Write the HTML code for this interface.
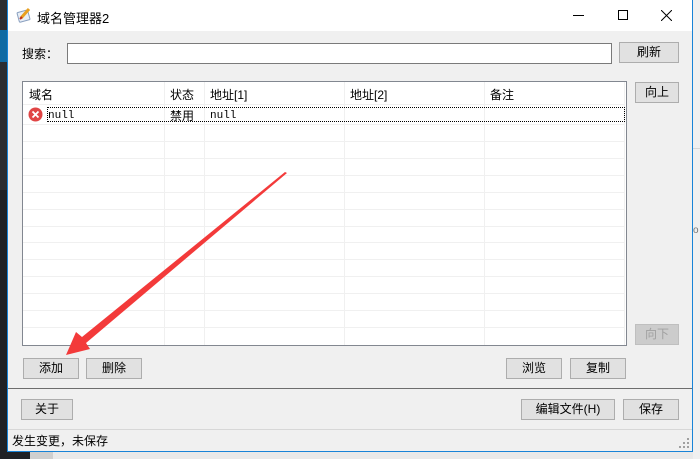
<!DOCTYPE html>
<html><head><meta charset="utf-8"><style>
*{margin:0;padding:0;box-sizing:border-box}
body{width:700px;height:459px;position:relative;overflow:hidden;background:#e9e9e9;font-family:"Liberation Sans","Noto Sans CJK SC",sans-serif;font-size:12px;color:#000}
.a{position:absolute}
.btn{position:absolute;background:#e1e1e1;border:1px solid #adadad;text-align:center;line-height:18px;font-size:12px}
.dis{color:#a0a0a0;background:#cccccc;border-color:#bfbfbf}
.hl{position:absolute;left:23px;width:601px;height:1px;background:#f0f0f0}
.vl{position:absolute;top:82px;height:263px;width:1px;background:#f0f0f0}
.th{position:absolute;top:86px;font-size:12px}
</style></head><body>
<div class="a" style="left:0;top:0;width:7px;height:190px;background:#2b2d31"></div>
<div class="a" style="left:0;top:190px;width:7px;height:269px;background:#1f2125"></div>
<div class="a" style="left:0;top:30px;width:7px;height:32px;background:#0f6aa3"></div>
<div class="a" style="left:0;top:452px;width:30px;height:7px;background:#1f2125"></div>
<div class="a" style="left:30px;top:452px;width:23px;height:7px;background:#cfcfcf"></div>
<div class="a" style="left:693px;top:0;width:7px;height:459px;background:#f0f0f0"></div>
<div class="a" style="left:693px;top:148px;width:7px;height:1px;background:#d6d6d6"></div>
<div class="a" style="left:693px;top:225px;font-size:10px;color:#777">o</div>
<div class="a" style="left:7px;top:0;width:686px;height:452px;background:#f0f0f0;border:1px solid #1883d7"></div>
<div class="a" style="left:8px;top:0;width:684px;height:31px;background:#fff"></div>
<svg class="a" style="left:16px;top:7px" width="16" height="16" viewBox="0 0 16 16"><rect x="2" y="4" width="11" height="10" rx="1" fill="#e8eef6" stroke="#8aa0c0" transform="rotate(-15 8 9)"/><path d="M5 11 L13 2" stroke="#e8a020" stroke-width="3"/><path d="M4 12 L6 10" stroke="#c03020" stroke-width="2"/></svg>
<div class="a" style="left:37px;top:8px;font-size:13px">域名管理器2</div>
<div class="a" style="left:573px;top:15px;width:11px;height:1px;background:#000"></div>
<div class="a" style="left:618px;top:10px;width:10px;height:10px;border:1px solid #000"></div>
<svg class="a" style="left:661px;top:10px" width="11" height="11"><path d="M0 0L11 11M11 0L0 11" stroke="#000" stroke-width="1"/></svg>
<div class="a" style="left:22px;top:45px">搜索：</div>
<div class="a" style="left:67px;top:43px;width:545px;height:21px;background:#fff;border:1px solid #7a7a7a"></div>
<div class="btn" style="left:619px;top:42px;width:60px;height:21px">刷新</div>
<div class="a" style="left:22px;top:81px;width:605px;height:265px;background:#fff;border:1px solid #828790"></div>
<div class="hl" style="top:104px"></div>
<div class="hl" style="top:124px"></div>
<div class="hl" style="top:141px"></div><div class="hl" style="top:158px"></div><div class="hl" style="top:175px"></div><div class="hl" style="top:192px"></div><div class="hl" style="top:209px"></div><div class="hl" style="top:226px"></div><div class="hl" style="top:242px"></div><div class="hl" style="top:259px"></div><div class="hl" style="top:276px"></div><div class="hl" style="top:293px"></div><div class="hl" style="top:310px"></div><div class="hl" style="top:327px"></div>
<div class="vl" style="left:164px"></div><div class="vl" style="left:204px"></div><div class="vl" style="left:344px"></div><div class="vl" style="left:484px"></div><div class="vl" style="left:624px"></div>
<div class="th" style="left:29px">域名</div>
<div class="th" style="left:170px">状态</div>
<div class="th" style="left:210px">地址[1]</div>
<div class="th" style="left:350px">地址[2]</div>
<div class="th" style="left:490px">备注</div>
<div class="a" style="left:47px;top:107px;width:578px;height:15px;border:1px dotted #000"></div>
<svg class="a" style="left:28px;top:107px" width="15" height="15"><circle cx="7.5" cy="7.5" r="7" fill="#e04545"/><path d="M4.5 4.5L10.5 10.5M10.5 4.5L4.5 10.5" stroke="#fff" stroke-width="1.8"/></svg>
<div class="a" style="left:48px;top:110px;font-family:'Liberation Mono',monospace;font-size:11px;line-height:12px">null</div>
<div class="a" style="left:170px;top:107px">禁用</div>
<div class="a" style="left:210px;top:110px;font-family:'Liberation Mono',monospace;font-size:11px;line-height:12px">null</div>
<div class="btn" style="left:635px;top:82px;width:44px;height:21px">向上</div>
<div class="btn dis" style="left:635px;top:324px;width:44px;height:21px">向下</div>
<div class="btn" style="left:23px;top:358px;width:56px;height:21px">添加</div>
<div class="btn" style="left:86px;top:358px;width:56px;height:21px">删除</div>
<div class="btn" style="left:506px;top:358px;width:56px;height:21px">浏览</div>
<div class="btn" style="left:570px;top:358px;width:56px;height:21px">复制</div>
<div class="a" style="left:8px;top:388px;width:684px;height:1px;background:#6d6d6d"></div>
<div class="btn" style="left:21px;top:399px;width:52px;height:21px">关于</div>
<div class="btn" style="left:521px;top:399px;width:94px;height:21px">编辑文件(H)</div>
<div class="btn" style="left:623px;top:399px;width:56px;height:21px">保存</div>
<div class="a" style="left:8px;top:429px;width:684px;height:1px;background:#d7d7d7"></div>
<div class="a" style="left:12px;top:432px">发生变更，未保存</div>
<svg class="a" style="left:679px;top:438px" width="12" height="12"><g fill="#a0a0a0"><rect x="8" y="0" width="2" height="2"/><rect x="4" y="4" width="2" height="2"/><rect x="8" y="4" width="2" height="2"/><rect x="0" y="8" width="2" height="2"/><rect x="4" y="8" width="2" height="2"/><rect x="8" y="8" width="2" height="2"/></g></svg>
<svg class="a" style="left:0;top:0" width="700" height="459"><polygon points="287,173 285,172 82,337 76,332 66,355 90,349 86,343" fill="#f33a3a"/></svg>
</body></html>
